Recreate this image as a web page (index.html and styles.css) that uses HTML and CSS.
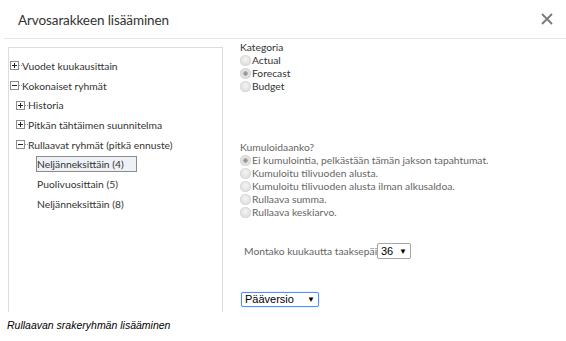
FILE: index.html
```html
<!DOCTYPE html>
<html>
<head>
<meta name="viewport" content="width=device-width, initial-scale=1">
<title>Arvosarakkeen lisääminen</title>
<link rel="stylesheet" href="styles.css">
</head>
<body>

<div class="dialog">
  <div class="header">
    <span class="title">Arvosarakkeen lisääminen</span>
    <svg class="close" width="12" height="12"><path d="M1 1l10 10M11 1L1 11" stroke="#7a7a7a" stroke-width="1.8"/></svg>
  </div>

  <div class="content">
    <div class="tree">
      <div class="node"><svg class="toggle" width="9" height="9"><rect x="0.5" y="0.5" width="8" height="8" fill="#fff" stroke="#8c8c8c"/><path d="M2 4.5h5M4.5 2v5" stroke="#222"/></svg><span class="dots"></span>Vuodet kuukausittain</div>
      <div class="node"><svg class="toggle" width="9" height="9"><rect x="0.5" y="0.5" width="8" height="8" fill="#fff" stroke="#8c8c8c"/><path d="M2 4.5h5" stroke="#222"/></svg><span class="dots"></span>Kokonaiset ryhmät</div>
      <div class="node sub"><svg class="toggle" width="9" height="9"><rect x="0.5" y="0.5" width="8" height="8" fill="#fff" stroke="#8c8c8c"/><path d="M2 4.5h5M4.5 2v5" stroke="#222"/></svg><span class="dots"></span>Historia</div>
      <div class="node sub"><svg class="toggle" width="9" height="9"><rect x="0.5" y="0.5" width="8" height="8" fill="#fff" stroke="#8c8c8c"/><path d="M2 4.5h5M4.5 2v5" stroke="#222"/></svg><span class="dots"></span>Pitkän tähtäimen suunnitelma</div>
      <div class="node sub"><svg class="toggle" width="9" height="9"><rect x="0.5" y="0.5" width="8" height="8" fill="#fff" stroke="#8c8c8c"/><path d="M2 4.5h5" stroke="#222"/></svg><span class="dots"></span>Rullaavat ryhmät (pitkä ennuste)</div>
      <div class="node leaf"><span class="selected">Neljänneksittäin (4)</span></div>
      <div class="node leaf"><span>Puolivuosittain (5)</span></div>
      <div class="node leaf"><span>Neljänneksittäin (8)</span></div>
    </div>

    <div class="form">
      <div class="group">
        <div class="label">Kategoria</div>
        <label class="option"><input type="radio" name="cat">Actual</label>
        <label class="option"><input type="radio" name="cat" checked>Forecast</label>
        <label class="option"><input type="radio" name="cat">Budget</label>
      </div>

      <div class="group muted cumul">
        <div class="label">Kumuloidaanko?</div>
        <label class="option"><input type="radio" name="cum" checked>Ei kumulointia, pelkästään tämän jakson tapahtumat.</label>
        <label class="option"><input type="radio" name="cum">Kumuloitu tilivuoden alusta.</label>
        <label class="option"><input type="radio" name="cum">Kumuloitu tilivuoden alusta ilman alkusaldoa.</label>
        <label class="option"><input type="radio" name="cum">Rullaava summa.</label>
        <label class="option"><input type="radio" name="cum">Rullaava keskiarvo.</label>
      </div>

      <div class="months muted">
        <span class="months-label">Montako kuukautta taaksepäin</span><span class="select small">36 <i>&#9660;</i></span>
      </div>

      <div class="version">
        <span class="select wide">Pääversio <i>&#9660;</i></span>
      </div>
    </div>
  </div>

  <div class="caption">Rullaavan srakeryhmän lisääminen</div>
</div>

</body>
</html>
```

FILE: styles.css
```css
body {
    margin: 0;
    background-color: white;
    font-family: Lato, "Noto Sans", sans-serif;
    color: #333;
}

.dialog {
    width: 566px;
    height: 341px;
    overflow: hidden;
}

.header {
    display: flex;
    justify-content: space-between;
    align-items: center;
    height: 38px;
    margin-left: 4px;
    padding: 0 13px 0 14px;
    border-bottom: 1px solid #e6e6e6;
}

.title {
    font-size: 13.5px;
    letter-spacing: -0.1px;
    color: #333;
    padding-top: 1px;
}

.close {
    display: block;
}

.content {
    display: flex;
    align-items: flex-start;
    height: 274px;
}

.tree {
    width: 215px;
    height: 265px;
    margin: 8px 0 0 8px;
    padding-top: 8px;
    border: 1px solid #dcdcdc;
    border-bottom: none;
    font-size: 10.3px;
    box-sizing: border-box;
}

.node {
    display: flex;
    align-items: center;
    height: 19.7px;
    padding-left: 1px;
    white-space: nowrap;
}

.node.sub {
    padding-left: 7px;
}

.node.leaf {
    padding-left: 28px;
}

.toggle {
    flex: none;
}

.dots {
    width: 3px;
    border-top: 1px dotted #999;
}

.selected {
    border: 1px solid #8a8a8a;
    background-color: #eef1f6;
    padding: 1px 12px 1px 0;
    margin-left: -1px;
}

.form {
    margin-left: 17px;
    padding-top: 2px;
    font-size: 10.3px;
    line-height: 13px;
}

.label {
    height: 13px;
}

.option {
    display: flex;
    align-items: center;
    height: 13px;
    white-space: nowrap;
}

.option input {
    appearance: none;
    width: 11px;
    height: 11px;
    margin: 0 1px 0 0;
    border-radius: 50%;
    background: radial-gradient(circle at 50% 40%, #f4f4f4, #d6d6d6);
    box-shadow: inset 0 0 0 1px #dadada;
}

.option input:checked {
    background: radial-gradient(circle, #8d8d8d 0, #a8a8a8 2px, #e4e4e4 2.6px, #d4d4d4 100%);
}

.muted {
    color: #666;
}

.cumul {
    margin-top: 48px;
}

.months {
    display: flex;
    align-items: center;
    margin-top: 24px;
    margin-left: 4px;
}

.months-label {
    width: 133px;
    overflow: hidden;
    white-space: nowrap;
}

.select {
    display: inline-flex;
    justify-content: space-between;
    align-items: center;
    box-sizing: border-box;
    height: 16px;
    padding: 0 3px;
    border: 1px solid #a6a6a6;
    border-radius: 2px;
    color: #000;
    font-family: "Liberation Sans", Arial, sans-serif;
    font-size: 11px;
}

.select i {
    font-style: normal;
    font-size: 8px;
}

.small {
    width: 34px;
}

.version {
    margin-top: 33px;
    margin-left: 1px;
}

.wide {
    width: 78px;
    height: 15px;
    border-color: #4d90fe;
    box-shadow: 0 0 1px #4d90fe;
}

.caption {
    padding-left: 7px;
    margin-top: 6px;
    font-family: "Liberation Sans", Arial, sans-serif;
    font-size: 10.5px;
    font-style: italic;
    color: #000;
}
```
